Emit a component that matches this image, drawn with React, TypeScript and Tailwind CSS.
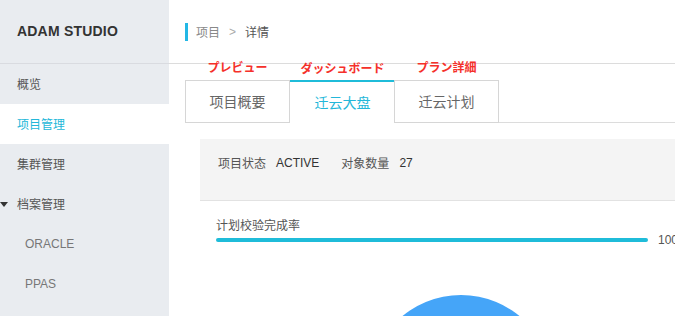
import React from 'react';

const menu = [
    { label: '概览' },
    { label: '项目管理', active: true },
    { label: '集群管理' },
    { label: '档案管理', open: true },
    { label: 'ORACLE', sub: true },
    { label: 'PPAS', sub: true },
];

const tabs = [
    { label: '项目概要', note: 'プレビュー' },
    { label: '迁云大盘', note: 'ダッシュボード', active: true },
    { label: '迁云计划', note: 'プラン詳細' },
];

const cjk = { fontFamily: '"Noto Sans CJK SC", "Liberation Sans", sans-serif' };

export default function App() {
    return (
        <div className="flex w-[675px] h-[316px] overflow-hidden bg-white" style={cjk}>
            <aside className="w-[169px] flex-shrink-0 bg-[#e9ecf0] flex flex-col">
                <div className="h-[64px] border-b border-[#d9dbe0] flex items-center pl-[17px]">
                    <span className="text-[14px] font-bold text-[#333] tracking-[0.2px] font-['Liberation_Sans',sans-serif]">ADAM STUDIO</span>
                </div>
                {menu.map((item) => (
                    <div
                        key={item.label}
                        className={`relative h-[40px] flex items-center text-[12px] ${item.sub ? 'pl-[25px] text-[#777] font-["Liberation_Sans",sans-serif]' : 'pl-[17px]'} ${item.active ? 'bg-white text-[#23b7d9]' : item.sub ? '' : 'text-[#555]'}`}
                    >
                        {item.open && (
                            <span className="absolute left-0 top-[18px] w-0 h-0 border-l-[4px] border-r-[4px] border-t-[5px] border-l-transparent border-r-transparent border-t-[#333]" />
                        )}
                        {item.label}
                    </div>
                ))}
            </aside>

            <main className="flex-1 min-w-0 flex flex-col">
                <div className="h-[64px] flex-shrink-0 border-b border-[#dcdcdc] flex items-center pl-[16px]">
                    <span className="w-[3px] h-[18px] bg-[#23b7e5] mr-[8px]" />
                    <span className="text-[12px] text-[#888]">项目</span>
                    <span className="text-[12px] text-[#aaa] ml-[9px] mr-[9px] font-['Liberation_Sans',sans-serif]">&gt;</span>
                    <span className="text-[12px] text-[#555]">详情</span>
                </div>

                <div className="pl-[16px] pt-[16px]">
                    <div className="relative flex border-b border-[#dcdcdc] w-[700px]">
                        {tabs.map((tab, i) => (
                            <div
                                key={tab.label}
                                className={`relative w-[105px] h-[43px] flex items-center justify-center text-[14px] -mb-px ${tab.active ? 'bg-white text-[#23b7d9] border-t-2 border-t-[#1fbcd9] border-b border-b-white' : 'text-[#666] border border-[#d6d6d6]'} ${i === 2 ? '-ml-px' : ''}`}
                            >
                                <span className="absolute top-[-20px] left-0 right-0 text-center text-[12px] font-bold text-[#f5302a] leading-none">{tab.note}</span>
                                {tab.label}
                            </div>
                        ))}
                    </div>

                    <div className="ml-[15px] mt-[16px] w-[600px]">
                        <div className="h-[62px] bg-[#f4f4f4] border-b border-[#e2e2e2] flex items-center pl-[18px] pb-[14px] text-[12px]">
                            <span className="text-[#555]">项目状态</span>
                            <span className="ml-[10px] text-[#333] font-['Liberation_Sans',sans-serif]">ACTIVE</span>
                            <span className="ml-[22px] text-[#555]">对象数量</span>
                            <span className="ml-[10px] text-[#333] font-['Liberation_Sans',sans-serif]">27</span>
                        </div>

                        <div className="pl-[16px] pt-[17px]">
                            <div className="text-[12px] text-[#555] leading-[14px]">计划校验完成率</div>
                            <div className="flex items-center h-[16px]">
                                <div className="w-[432px] h-[4px] rounded-full bg-[#1fbcd9]" />
                                <span className="ml-[10px] text-[12px] text-[#555] font-['Liberation_Sans',sans-serif]">100%</span>
                            </div>
                        </div>

                        <svg width="600" height="80" className="block mt-[4px]">
                            <circle cx={261} cy={135} r={92} fill="#45a5f8" />
                        </svg>
                    </div>
                </div>
            </main>
        </div>
    );
}
